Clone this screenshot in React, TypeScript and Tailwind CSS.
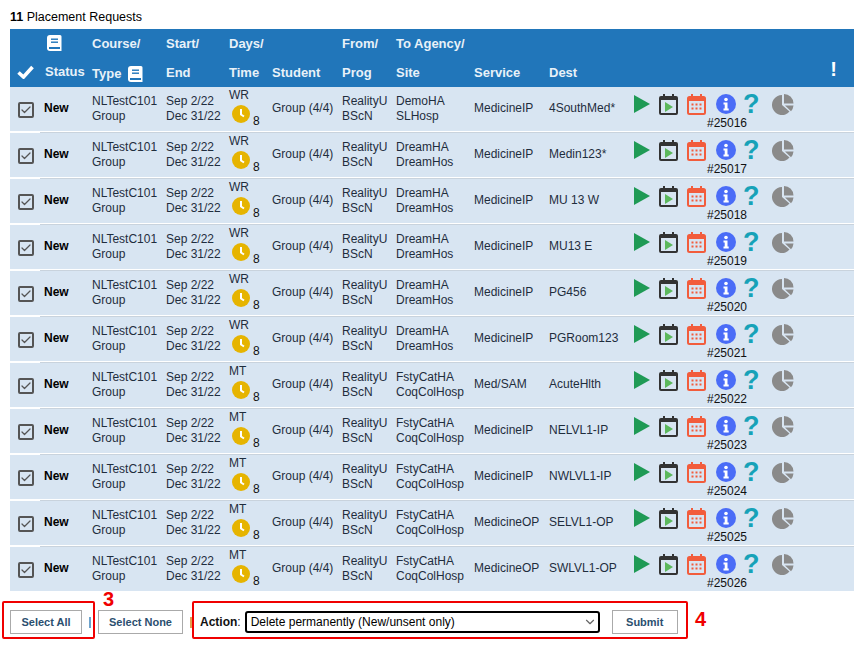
import { Check, ChevronDown } from "lucide-react";

const COLS = "grid grid-cols-[34px_48px_74px_63px_43px_70px_54px_78px_75px_85px_1fr]";

const rows = [
  { days: "WR", from: "RealityU", agency: "DemoHA", site: "SLHosp", service: "MedicineIP", dest: "4SouthMed*", id: "#25016" },
  { days: "WR", from: "RealityU", agency: "DreamHA", site: "DreamHos", service: "MedicineIP", dest: "Medin123*", id: "#25017" },
  { days: "WR", from: "RealityU", agency: "DreamHA", site: "DreamHos", service: "MedicineIP", dest: "MU 13 W", id: "#25018" },
  { days: "WR", from: "RealityU", agency: "DreamHA", site: "DreamHos", service: "MedicineIP", dest: "MU13 E", id: "#25019" },
  { days: "WR", from: "RealityU", agency: "DreamHA", site: "DreamHos", service: "MedicineIP", dest: "PG456", id: "#25020" },
  { days: "WR", from: "RealityU", agency: "DreamHA", site: "DreamHos", service: "MedicineIP", dest: "PGRoom123", id: "#25021" },
  { days: "MT", from: "RealityU", agency: "FstyCatHA", site: "CoqColHosp", service: "Med/SAM", dest: "AcuteHlth", id: "#25022" },
  { days: "MT", from: "RealityU", agency: "FstyCatHA", site: "CoqColHosp", service: "MedicineIP", dest: "NELVL1-IP", id: "#25023" },
  { days: "MT", from: "RealityU", agency: "FstyCatHA", site: "CoqColHosp", service: "MedicineIP", dest: "NWLVL1-IP", id: "#25024" },
  { days: "MT", from: "RealityU", agency: "FstyCatHA", site: "CoqColHosp", service: "MedicineOP", dest: "SELVL1-OP", id: "#25025" },
  { days: "MT", from: "RealityU", agency: "FstyCatHA", site: "CoqColHosp", service: "MedicineOP", dest: "SWLVL1-OP", id: "#25026" },
];

function BookIcon() {
  return (
    <svg width="15" height="16" viewBox="0 0 15 16">
      <path d="M3 0h10a1.5 1.5 0 0 1 1.5 1.5V16H3a3 3 0 0 1-3-3V3a3 3 0 0 1 3-3z" fill="#fff" />
      <rect x="4" y="3.5" width="7" height="1.4" fill="#2176ba" />
      <rect x="4" y="6.5" width="7" height="1.4" fill="#2176ba" />
      <rect x="2" y="12" width="11" height="2" fill="#2176ba" />
    </svg>
  );
}

function ClockIcon() {
  return (
    <svg width="18" height="18" viewBox="0 0 18 18">
      <circle cx="9" cy="9" r="9" fill="#e6b400" />
      <path d="M9 4v5.5l3 2" fill="none" stroke="#fff" strokeWidth="2" />
    </svg>
  );
}

function RowIcons({ id }: { id: string }) {
  return (
    <div className="relative h-full">
      <div className="flex items-center h-[22px] mt-[6px]">
        <svg width="16" height="18" viewBox="0 0 16 18">
          <path d="M0 0l16 9L0 18z" fill="#1f9a55" />
        </svg>
        <svg width="19" height="21" viewBox="0 0 19 21" className="ml-[9px]">
          <rect x="1" y="3" width="17" height="17" rx="1" fill="#d8e5f2" stroke="#333" strokeWidth="2" />
          <rect x="1" y="3" width="17" height="3" fill="#333" />
          <rect x="4" y="0" width="2" height="4" fill="#333" />
          <rect x="13" y="0" width="2" height="4" fill="#333" />
          <path d="M6 8l8 5-8 5z" fill="#5cb85c" />
        </svg>
        <svg width="19" height="21" viewBox="0 0 19 21" className="ml-[9px]">
          <rect x="1" y="3" width="17" height="17" rx="1.5" fill="#d8e5f2" stroke="#f25c3c" strokeWidth="2" />
          <rect x="1" y="3" width="17" height="4" fill="#f25c3c" />
          <rect x="4" y="0" width="2" height="4" fill="#f25c3c" />
          <rect x="13" y="0" width="2" height="4" fill="#f25c3c" />
          <path d="M4.5 9.5h2v2h-2zM8.5 9.5h2v2h-2zM12.5 9.5h2v2h-2zM4.5 13.5h2v2h-2zM8.5 13.5h2v2h-2zM12.5 13.5h2v2h-2z" fill="#f25c3c" />
        </svg>
        <svg width="20" height="20" viewBox="0 0 20 20" className="ml-[10px]">
          <circle cx="10" cy="10" r="10" fill="#4a6cf7" />
          <circle cx="10" cy="5.5" r="1.8" fill="#fff" />
          <path d="M7.5 8.5h4v6h1.2v2H7.5v-2h1.2v-4H7.5z" fill="#fff" />
        </svg>
        <span className="ml-[7px] w-[16px] text-[27px] leading-[22px] font-bold text-[#17a2b8]">?</span>
        <svg width="22" height="21" viewBox="0 0 22 21" className="ml-[13px]">
          <path d="M10 11V1a10 10 0 1 0 7.5 16.6z" fill="#8a8a8a" />
          <path d="M12 0a9.5 9.5 0 0 1 9.5 9.5H12z" fill="#8a8a8a" />
          <path d="M13 11.5h8.5a10 10 0 0 1-2.5 5.7z" fill="#8a8a8a" />
        </svg>
      </div>
      <span className="absolute left-[73px] top-[29px] text-[12px] leading-[14px] text-[#111]">{id}</span>
    </div>
  );
}

function Row({ row }: { row: (typeof rows)[number] }) {
  return (
    <div className="[&:last-child>.divider]:hidden">
      <div className={`${COLS} h-[44px] bg-[#d8e5f2] text-[12px] leading-[15px] text-[#1f2d3d] mb-[1px]`}>
        <div className="flex items-center pl-[8px]">
          <div className="mt-[2px] w-[16px] h-[16px] rounded-[2px] border-2 border-[#555] flex items-center justify-center">
            <Check size={12} strokeWidth={2.5} className="text-[#555]" />
          </div>
        </div>
        <div className="flex items-center pb-[2px] font-bold text-black">New</div>
        <div className="flex flex-col justify-center">
          <span>NLTestC101</span>
          <span>Group</span>
        </div>
        <div className="flex flex-col justify-center">
          <span>Sep 2/22</span>
          <span>Dec 31/22</span>
        </div>
        <div className="relative">
          <span className="absolute top-[1px] left-0">{row.days}</span>
          <span className="absolute left-[3px] top-[18px]"><ClockIcon /></span>
          <span className="absolute left-[24px] top-[27px] text-[#111]">8</span>
        </div>
        <div className="flex items-center pb-[2px]">Group (4/4)</div>
        <div className="flex flex-col justify-center">
          <span>{row.from}</span>
          <span>BScN</span>
        </div>
        <div className="flex flex-col justify-center">
          <span>{row.agency}</span>
          <span>{row.site}</span>
        </div>
        <div className="flex items-center pb-[2px]">{row.service}</div>
        <div className="flex items-center pb-[2px]">{row.dest}</div>
        <RowIcons id={row.id} />
      </div>
      <div className="divider ml-[30px] h-[1px] bg-[#c9d3dd]" />
    </div>
  );
}

export default function App() {
  return (
    <div className="w-[863px] h-[645px] bg-white overflow-hidden font-['Liberation_Sans',Arial,sans-serif]">
      <div className="pl-[10px] pt-[10px] h-[29px] text-[12.5px] leading-[14px] text-black">
        <b>11</b> Placement Requests
      </div>

      <div className="mx-[10px] w-[844px]">
        {/* Header */}
        <div className={`${COLS} h-[58px] bg-[#2176ba] text-[13px] font-bold text-[#e8f1f8]`}>
          <div className="flex items-end pb-[8px] pl-[7px]">
            <svg width="17" height="14" viewBox="0 0 17 14">
              <path d="M1.5 7.5l5 4.5L15.5 2" fill="none" stroke="#fff" strokeWidth="3.6" />
            </svg>
          </div>
          <div className="flex flex-col">
            <span className="h-[29px] pl-[3px] pt-[6px]"><BookIcon /></span>
            <span className="pt-[4px] pl-[1px]">Status</span>
          </div>
          <div className="flex flex-col">
            <span className="h-[29px] pt-[5px]">Course/</span>
            <span className="flex items-center gap-[7px] pt-[6px]">Type <BookIcon /></span>
          </div>
          <div className="flex flex-col">
            <span className="h-[29px] pt-[5px]">Start/</span>
            <span className="pt-[5px]">End</span>
          </div>
          <div className="flex flex-col">
            <span className="h-[29px] pt-[5px]">Days/</span>
            <span className="pt-[5px]">Time</span>
          </div>
          <div className="pt-[34px]">Student</div>
          <div className="flex flex-col">
            <span className="h-[29px] pt-[5px]">From/</span>
            <span className="pt-[5px]">Prog</span>
          </div>
          <div className="flex flex-col whitespace-nowrap">
            <span className="h-[29px] pt-[5px]">To Agency/</span>
            <span className="pt-[5px]">Site</span>
          </div>
          <div className="pt-[34px]">Service</div>
          <div className="pt-[34px]">Dest</div>
          <div className="flex justify-end pr-[17px] pt-[28px] text-[20px] leading-[24px] text-white">!</div>
        </div>

        <div className="bg-white">
          {rows.map((row) => (
            <Row key={row.id} row={row} />
          ))}
        </div>
      </div>

      {/* Bottom actions */}
      <div className="relative flex items-center h-[38px] mt-[10px] pt-[4px] pl-[10px] text-[11px]">
        <div className="absolute left-[2px] top-0 w-[93px] h-[38px] rounded-[2px] border-2 border-[#f00000]" />
        <span className="absolute left-[103px] top-[-12px] text-[20px] leading-[20px] font-bold text-[#f00000]">3</span>
        <button className="w-[72px] h-[24px] border border-[#aaa] bg-white font-bold text-[#2b4f6f]">Select All</button>
        <span className="ml-[7px] w-[2px] h-[11px] bg-[#6ea3cc]" />
        <button className="ml-[7px] w-[85px] h-[24px] border border-[#aaa] bg-white font-bold text-[#2b4f6f]">Select None</button>
        <span className="ml-[7px] w-[2px] h-[11px] bg-[#e0a050]" />
        <div className="absolute left-[192px] top-0 w-[496px] h-[38px] rounded-[2px] border-2 border-[#f00000]" />
        <span className="ml-[8px] text-[12px] text-[#111]"><b>Action</b>:</span>
        <div className="relative ml-[4px] w-[355px] h-[22px]">
          <select className="appearance-none w-full h-full rounded-[3px] border-2 border-black bg-white text-[12px] text-black pl-[4px]">
            <option>Delete permanently (New/unsent only)</option>
          </select>
          <ChevronDown size={14} className="absolute right-[3px] top-[4px] text-[#666] pointer-events-none" />
        </div>
        <button className="ml-[12px] w-[66px] h-[24px] border border-[#aaa] bg-white font-bold text-[#2b4f6f]">Submit</button>
        <span className="absolute left-[695px] top-[8px] text-[20px] leading-[20px] font-bold text-[#f00000]">4</span>
      </div>
    </div>
  );
}
